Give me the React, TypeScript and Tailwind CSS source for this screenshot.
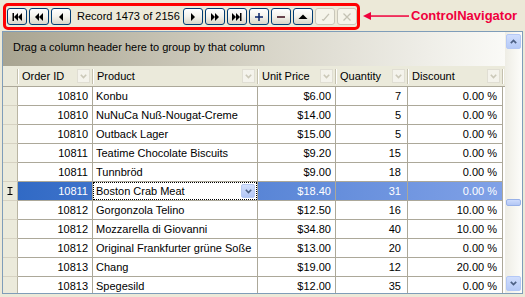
import React from "react";

interface Row {
  id: string;
  product: string;
  price: string;
  qty: string;
  discount: string;
}

const rows: Row[] = [
  { id: "10810", product: "Konbu", price: "$6.00", qty: "7", discount: "0.00 %" },
  { id: "10810", product: "NuNuCa Nuß-Nougat-Creme", price: "$14.00", qty: "5", discount: "0.00 %" },
  { id: "10810", product: "Outback Lager", price: "$15.00", qty: "5", discount: "0.00 %" },
  { id: "10811", product: "Teatime Chocolate Biscuits", price: "$9.20", qty: "15", discount: "0.00 %" },
  { id: "10811", product: "Tunnbröd", price: "$9.00", qty: "18", discount: "0.00 %" },
  { id: "10811", product: "Boston Crab Meat", price: "$18.40", qty: "31", discount: "0.00 %" },
  { id: "10812", product: "Gorgonzola Telino", price: "$12.50", qty: "16", discount: "10.00 %" },
  { id: "10812", product: "Mozzarella di Giovanni", price: "$34.80", qty: "40", discount: "10.00 %" },
  { id: "10812", product: "Original Frankfurter grüne Soße", price: "$13.00", qty: "20", discount: "0.00 %" },
  { id: "10813", product: "Chang", price: "$19.00", qty: "12", discount: "20.00 %" },
  { id: "10813", product: "Spegesild", price: "$12.00", qty: "35", discount: "0.00 %" },
];

const SELECTED = 5;

// glyphs for the navigator buttons
const Glyph = ({ kind, color = "#000" }: { kind: string; color?: string }) => {
  const svg = (children: React.ReactNode) => (
    <svg width="10" height="8" viewBox="0 0 10 8" fill={color} stroke="none">
      {children}
    </svg>
  );
  switch (kind) {
    case "first":
      return svg(
        <>
          <rect x="0.5" y="0" width="1.5" height="8" />
          <polygon points="2,4 6,0 6,8" />
          <polygon points="6,4 10,0 10,8" />
        </>
      );
    case "prevPage":
      return svg(
        <>
          <polygon points="1,4 5,0 5,8" />
          <polygon points="5,4 9,0 9,8" />
        </>
      );
    case "prev":
      return svg(<polygon points="3,4 7,0 7,8" />);
    case "next":
      return svg(<polygon points="7,4 3,0 3,8" />);
    case "nextPage":
      return svg(
        <>
          <polygon points="5,4 1,0 1,8" />
          <polygon points="9,4 5,0 5,8" />
        </>
      );
    case "last":
      return svg(
        <>
          <polygon points="4,4 0,0 0,8" />
          <polygon points="8,4 4,0 4,8" />
          <rect x="8" y="0" width="1.5" height="8" />
        </>
      );
    case "append":
      return svg(
        <>
          <rect x="1" y="3.25" width="8" height="1.5" fill="#0a246a" />
          <rect x="4.25" y="0" width="1.5" height="8" fill="#0a246a" />
        </>
      );
    case "remove":
      return svg(<rect x="1" y="3.25" width="8" height="1.5" fill="#3a0a1a" />);
    case "edit":
      return svg(<polygon points="5,1.5 9.5,6 0.5,6" />);
    case "endEdit":
      return (
        <svg width="10" height="8" viewBox="0 0 10 8" fill="none" stroke={color} strokeWidth="1.3">
          <path d="M2 6.5 L3.5 7.2 L9 0.8" />
        </svg>
      );
    case "cancel":
      return (
        <svg width="10" height="8" viewBox="0 0 10 8" fill="none" stroke={color} strokeWidth="1.3">
          <path d="M1.5 0.5 L8.5 7.5 M8.5 0.5 L1.5 7.5" />
        </svg>
      );
    default:
      return null;
  }
};

const NavButton = ({ kind, disabled }: { kind: string; disabled?: boolean }) => (
  <div
    className={`flex h-[17px] w-[20px] shrink-0 items-center justify-center rounded-[3px] border ${
      disabled
        ? "border-[#c9c7ba] bg-[#f5f4ea]"
        : "border-[#003c74] bg-linear-to-b from-[#ffffff] via-[#f3f2ec] to-[#d9d5c8]"
    }`}
  >
    <Glyph kind={kind} color={disabled ? "#c4c2b4" : "#000"} />
  </div>
);

const Chevron = ({ color, w = 7 }: { color: string; w?: number }) => (
  <svg width={w} height="5" viewBox="0 0 7 5" fill="none" stroke={color} strokeWidth="1.6">
    <path d="M0.8 0.8 L3.5 3.6 L6.2 0.8" />
  </svg>
);

const HeaderCell = ({ label, width }: { label: string; width: string }) => (
  <div className={`flex h-full items-center ${width} shrink-0`}>
    <span className="flex-1 pl-[4px]">{label}</span>
    <div className="mr-[2px] flex h-[14px] w-[13px] items-center justify-center border border-[#e0ded3] bg-[#f4f3ec]">
      <Chevron color="#cbc8b8" />
    </div>
    <div className="h-[15px] w-px bg-[#c4c0ae] shadow-[1px_0_0_#ffffff]" />
  </div>
);

const ScrollButton = ({ up }: { up?: boolean }) => (
  <div className="flex h-[15px] w-[15px] items-center justify-center rounded-[2px] border border-[#b4c8f6] bg-linear-to-b from-[#d0defd] to-[#b6caf7]">
    <svg width="7" height="5" viewBox="0 0 7 5" fill="none" stroke="#4d6185" strokeWidth="1.7">
      <path d={up ? "M0.8 4.2 L3.5 1.4 L6.2 4.2" : "M0.8 0.8 L3.5 3.6 L6.2 0.8"} />
    </svg>
  </div>
);

export default function App() {
  return (
    <div className="h-[297px] w-[525px] overflow-hidden bg-[#ece9d8] font-['Liberation_Sans',Arial,sans-serif] text-[11px] text-black">
      {/* navigator bar */}
      <div className="flex h-[31px] items-start pl-[3px] pt-[3px]">
        <div className="flex h-[27px] w-[357px] items-center rounded-[5px] border-[3px] border-[#ff0000] bg-[#ece9d8] pl-px">
          <div className="flex gap-[2px]">
            <NavButton kind="first" />
            <NavButton kind="prevPage" />
            <NavButton kind="prev" />
          </div>
          <span className="ml-[6px] w-[106px] text-[11px]">Record 1473 of 2156</span>
          <div className="flex gap-[2px]">
            <NavButton kind="next" />
            <NavButton kind="nextPage" />
            <NavButton kind="last" />
            <NavButton kind="append" />
            <NavButton kind="remove" />
            <NavButton kind="edit" />
            <NavButton kind="endEdit" disabled />
            <NavButton kind="cancel" disabled />
          </div>
        </div>
        <div className="ml-[3px] flex h-[25px] items-center">
          <svg width="46" height="10" viewBox="0 0 46 10">
            <polygon points="0,5 8,1 8,9" fill="#f0003c" />
            <rect x="7" y="4.3" width="39" height="1.5" fill="#f0003c" />
          </svg>
          <span className="ml-[2px] text-[13px] font-bold text-[#f0003c]">ControlNavigator</span>
        </div>
      </div>

      {/* grid */}
      <div className="mx-[2px] flex h-[263px] border border-[#7f9db9] bg-white">
        <div className="flex min-w-0 flex-1 flex-col overflow-hidden">
          <div className="flex h-[34px] shrink-0 items-center bg-linear-to-r from-[#a8a491] via-[#d6d3c6] to-[#fafaf7] pb-[4px] pl-[10px]">
            Drag a column header here to group by that column
          </div>

          <div className="flex h-[21px] shrink-0 border-b border-[#aca899] bg-[#ebeadb]">
            <div className="flex h-full w-[15px] shrink-0 items-center justify-end">
              <div className="h-[15px] w-px bg-[#c4c0ae] shadow-[1px_0_0_#ffffff]" />
            </div>
            <HeaderCell label="Order ID" width="w-[75px]" />
            <HeaderCell label="Product" width="w-[165px]" />
            <HeaderCell label="Unit Price" width="w-[78px]" />
            <HeaderCell label="Quantity" width="w-[72px]" />
            <HeaderCell label="Discount" width="w-[95px]" />
          </div>

          {rows.map((r, i) => {
            const sel = i === SELECTED;
            const cell = "flex h-full shrink-0 items-center border-r border-[#aca899]";
            return (
              <div key={i} className="flex h-[19px] shrink-0">
                <div className="flex h-full w-[15px] shrink-0 items-center justify-center border-r border-b border-r-[#b9b5a3] border-b-[#d6d2c2] bg-[#ebeadb]">
                  {sel && (
                    <svg width="6" height="8" viewBox="0 0 6 8" fill="none" stroke="#000" strokeWidth="1">
                      <path d="M0.5 0.5 H5.5 M3 0.5 V7.5 M0.5 7.5 H5.5" />
                    </svg>
                  )}
                </div>
                <div
                  className={`flex h-full border-b border-[#aca899] ${
                    sel ? "bg-linear-to-r from-[#316ac5] to-[#80a1e7] text-white" : ""
                  }`}
                >
                  <div className={`${cell} w-[75px] justify-end pr-[4px]`}>{r.id}</div>
                  {sel ? (
                    <div className={`${cell} w-[165px] bg-white`}>
                      <div className="flex h-full w-full items-center border border-dotted border-black pl-[2px] pr-px text-black">
                        <span className="flex-1">{r.product}</span>
                        <div className="flex h-[14px] w-[14px] items-center justify-center rounded-[2px] border border-[#b9cbf3] bg-linear-to-b from-[#d3e0fd] to-[#b2c6f5]">
                          <Chevron color="#4d6185" />
                        </div>
                      </div>
                    </div>
                  ) : (
                    <div className={`${cell} w-[165px] pl-[3px]`}>{r.product}</div>
                  )}
                  <div className={`${cell} w-[78px] justify-end pr-[4px]`}>{r.price}</div>
                  <div className={`${cell} w-[72px] justify-end pr-[6px]`}>{r.qty}</div>
                  <div className={`${cell} w-[95px] justify-end pr-[5px]`}>{r.discount}</div>
                </div>
              </div>
            );
          })}
        </div>

        {/* vertical scrollbar */}
        <div className="flex w-[17px] shrink-0 flex-col items-center bg-linear-to-r from-[#eeede5] to-[#fdfdfa] pb-[2px] pt-[2px]">
          <ScrollButton up />
          <div className="flex flex-1 flex-col justify-start pt-[150px]">
            <div className="h-[7px] w-[15px] rounded-[2px] border border-[#98b1e8] bg-linear-to-b from-[#cddbfc] to-[#b3c7f5]" />
          </div>
          <ScrollButton />
        </div>
      </div>
    </div>
  );
}
